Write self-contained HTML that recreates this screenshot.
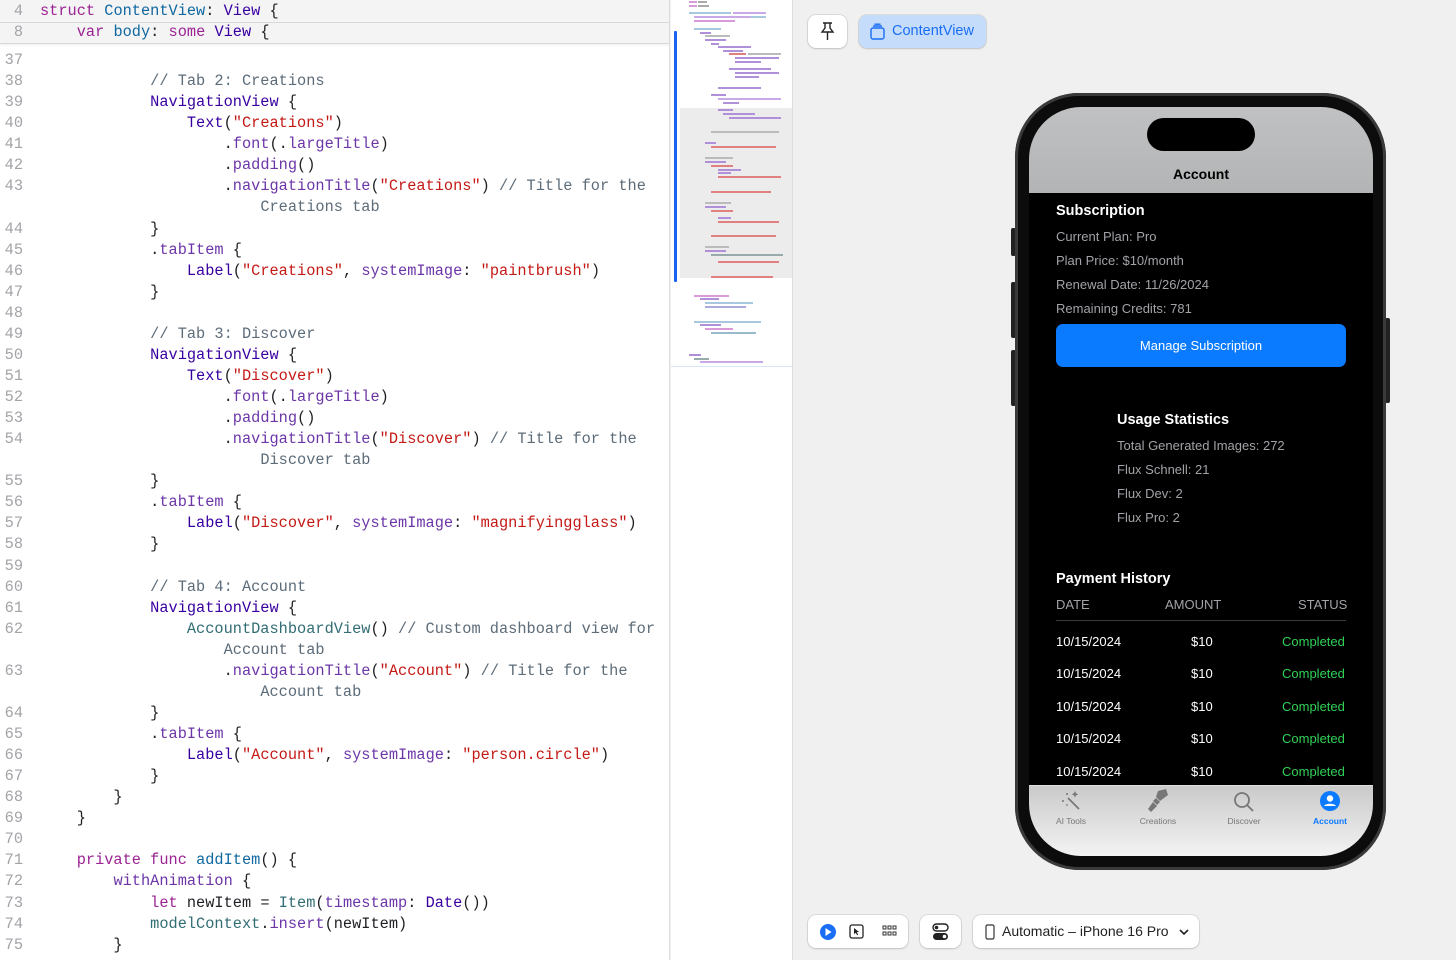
<!DOCTYPE html>
<html><head><meta charset="utf-8"><style>
*{margin:0;padding:0;box-sizing:border-box}
html,body{width:1456px;height:960px;overflow:hidden}
body{background:#f0f0f0;font-family:"Liberation Sans",sans-serif;position:relative}
#ed{position:absolute;left:0;top:0;width:670px;height:960px;background:#fff;border-right:1px solid #ddd;overflow:hidden}
.code{position:absolute;left:0;top:50px;font-family:"Liberation Mono",monospace;font-size:15.3px;line-height:21.07px;color:#1f1f24;white-space:pre}
.ln{display:inline-block;width:23px;text-align:right;color:#a3a3a8;margin-right:17px}
.k{color:#9b2393}.t{color:#3900a0}.f{color:#6c36a9}.s{color:#c41a16}.c{color:#5d6c79}.b{color:#0f68a0}.g{color:#326d74}
#hdr{position:absolute;left:0;top:0;width:670px;height:44px;background:#f4f4f5;border-bottom:1px solid #d8d8d8;box-shadow:0 1px 3px rgba(0,0,0,.08)}
#hdr .code{top:1px}
#hdr .r2{position:absolute;left:0;top:22px;width:670px;height:1px;background:#d8d8d8}
#mm{position:absolute;left:671px;top:0;width:122px;height:960px;background:#fff;border-right:1px solid #ddd}
.ab{position:absolute}
.btn{position:absolute;background:#fff;border-radius:8px;box-shadow:0 0 0 1px rgba(0,0,0,.08),0 1px 2px rgba(0,0,0,.12)}
.ph{position:absolute;color:#fff;font-size:13px;white-space:nowrap}
.gr{color:#a2a2a8}
</style></head><body>
<div id="ed">
<div class="code"><span class="ln">37</span>
<span class="ln">38</span>            <span class="c">// Tab 2: Creations</span>
<span class="ln">39</span>            <span class="t">NavigationView</span> {
<span class="ln">40</span>                <span class="t">Text</span>(<span class="s">"Creations"</span>)
<span class="ln">41</span>                    .<span class="f">font</span>(.<span class="f">largeTitle</span>)
<span class="ln">42</span>                    .<span class="f">padding</span>()
<span class="ln">43</span>                    .<span class="f">navigationTitle</span>(<span class="s">"Creations"</span>) <span class="c">// Title for the</span>
<span class="ln"></span>                        <span class="c">Creations tab</span>
<span class="ln">44</span>            }
<span class="ln">45</span>            .<span class="f">tabItem</span> {
<span class="ln">46</span>                <span class="t">Label</span>(<span class="s">"Creations"</span>, <span class="f">systemImage</span>: <span class="s">"paintbrush"</span>)
<span class="ln">47</span>            }
<span class="ln">48</span>
<span class="ln">49</span>            <span class="c">// Tab 3: Discover</span>
<span class="ln">50</span>            <span class="t">NavigationView</span> {
<span class="ln">51</span>                <span class="t">Text</span>(<span class="s">"Discover"</span>)
<span class="ln">52</span>                    .<span class="f">font</span>(.<span class="f">largeTitle</span>)
<span class="ln">53</span>                    .<span class="f">padding</span>()
<span class="ln">54</span>                    .<span class="f">navigationTitle</span>(<span class="s">"Discover"</span>) <span class="c">// Title for the</span>
<span class="ln"></span>                        <span class="c">Discover tab</span>
<span class="ln">55</span>            }
<span class="ln">56</span>            .<span class="f">tabItem</span> {
<span class="ln">57</span>                <span class="t">Label</span>(<span class="s">"Discover"</span>, <span class="f">systemImage</span>: <span class="s">"magnifyingglass"</span>)
<span class="ln">58</span>            }
<span class="ln">59</span>
<span class="ln">60</span>            <span class="c">// Tab 4: Account</span>
<span class="ln">61</span>            <span class="t">NavigationView</span> {
<span class="ln">62</span>                <span class="g">AccountDashboardView</span>() <span class="c">// Custom dashboard view for</span>
<span class="ln"></span>                    <span class="c">Account tab</span>
<span class="ln">63</span>                    .<span class="f">navigationTitle</span>(<span class="s">"Account"</span>) <span class="c">// Title for the</span>
<span class="ln"></span>                        <span class="c">Account tab</span>
<span class="ln">64</span>            }
<span class="ln">65</span>            .<span class="f">tabItem</span> {
<span class="ln">66</span>                <span class="t">Label</span>(<span class="s">"Account"</span>, <span class="f">systemImage</span>: <span class="s">"person.circle"</span>)
<span class="ln">67</span>            }
<span class="ln">68</span>        }
<span class="ln">69</span>    }
<span class="ln">70</span>
<span class="ln">71</span>    <span class="k">private func</span> <span class="b">addItem</span>() {
<span class="ln">72</span>        <span class="f">withAnimation</span> {
<span class="ln">73</span>            <span class="k">let</span> newItem = <span class="g">Item</span>(<span class="f">timestamp</span>: <span class="t">Date</span>())
<span class="ln">74</span>            <span class="g">modelContext</span>.<span class="f">insert</span>(newItem)
<span class="ln">75</span>        }</div>
<div id="hdr"><div class="r2"></div>
<div class="code"><span class="ln">4</span><span class="k">struct</span> <span class="b">ContentView</span>: <span class="t">View</span> {
<span class="ln">8</span>    <span class="k">var</span> <span class="b">body</span>: <span class="k">some</span> <span class="t">View</span> {</div></div>
</div>
<div id="mm">
<div class="ab" style="left:9px;top:108px;width:112px;height:170px;background:#ececec"></div>
<div class="ab" style="left:3px;top:31px;width:3px;height:251px;background:#1a62f0;border-radius:1px"></div>
<div class="ab" style="left:0;top:366px;width:121px;height:1px;background:#d8e6f8"></div>
<svg class="ab" style="left:0;top:0" width="122" height="370">
<g stroke-width="2">
<line x1="18" y1="2" x2="26" y2="2" stroke="#d89ad8"/><line x1="27" y1="2" x2="36" y2="2" stroke="#aaa"/>
<line x1="18" y1="6" x2="26" y2="6" stroke="#d89ad8"/><line x1="27" y1="6" x2="38" y2="6" stroke="#aaa"/>
<line x1="18" y1="13" x2="60" y2="13" stroke="#a8c8e0"/><line x1="62" y1="13" x2="95" y2="13" stroke="#c9a8e8"/>
<line x1="23" y1="17" x2="80" y2="17" stroke="#c9a8e8"/><line x1="80" y1="17" x2="95" y2="17" stroke="#a8c8e0"/>
<line x1="23" y1="21" x2="64" y2="21" stroke="#d89ad8"/>
<line x1="23" y1="29" x2="50" y2="29" stroke="#a8c8e0"/>
<line x1="29" y1="33" x2="40" y2="33" stroke="#b090d8"/>
<line x1="34" y1="36" x2="59" y2="36" stroke="#bbb"/>
<line x1="34" y1="40" x2="55" y2="40" stroke="#b090d8"/>
<line x1="40" y1="44" x2="48" y2="44" stroke="#b090d8"/>
<line x1="47" y1="47" x2="80" y2="47" stroke="#b090d8"/>
<line x1="52" y1="51" x2="72" y2="51" stroke="#b090d8"/>
<line x1="58" y1="54" x2="75" y2="54" stroke="#e08080"/><line x1="77" y1="54" x2="110" y2="54" stroke="#bbb"/>
<line x1="64" y1="58" x2="108" y2="58" stroke="#b090d8"/>
<line x1="64" y1="62" x2="90" y2="62" stroke="#b090d8"/>
<line x1="58" y1="69" x2="100" y2="69" stroke="#b090d8"/>
<line x1="64" y1="73" x2="108" y2="73" stroke="#b090d8"/>
<line x1="64" y1="77" x2="88" y2="77" stroke="#b090d8"/>
<line x1="47" y1="88" x2="90" y2="88" stroke="#b090d8"/>
<line x1="40" y1="95" x2="55" y2="95" stroke="#b090d8"/>
<line x1="47" y1="99" x2="110" y2="99" stroke="#c9a8e8"/>
<line x1="52" y1="103" x2="68" y2="103" stroke="#b090d8"/>
<line x1="47" y1="110" x2="62" y2="110" stroke="#b090d8"/>
<line x1="52" y1="114" x2="84" y2="114" stroke="#b090d8"/>
<line x1="58" y1="118" x2="110" y2="118" stroke="#b090d8"/>
<line x1="40" y1="132" x2="108" y2="132" stroke="#bbb"/>
<line x1="34" y1="143" x2="45" y2="143" stroke="#b090d8"/>
<line x1="40" y1="147" x2="105" y2="147" stroke="#e08080"/>
<line x1="34" y1="158" x2="62" y2="158" stroke="#bbb"/>
<line x1="34" y1="162" x2="55" y2="162" stroke="#b090d8"/>
<line x1="40" y1="166" x2="62" y2="166" stroke="#e08080"/>
<line x1="47" y1="170" x2="70" y2="170" stroke="#b090d8"/>
<line x1="47" y1="173" x2="60" y2="173" stroke="#b090d8"/>
<line x1="47" y1="177" x2="110" y2="177" stroke="#e08080"/>
<line x1="40" y1="192" x2="100" y2="192" stroke="#e08080"/>
<line x1="34" y1="203" x2="60" y2="203" stroke="#bbb"/>
<line x1="34" y1="207" x2="55" y2="207" stroke="#b090d8"/>
<line x1="40" y1="211" x2="62" y2="211" stroke="#e08080"/>
<line x1="47" y1="218" x2="60" y2="218" stroke="#b090d8"/>
<line x1="47" y1="222" x2="108" y2="222" stroke="#e08080"/>
<line x1="40" y1="236" x2="105" y2="236" stroke="#e08080"/>
<line x1="34" y1="247" x2="58" y2="247" stroke="#bbb"/>
<line x1="34" y1="251" x2="55" y2="251" stroke="#b090d8"/>
<line x1="40" y1="255" x2="112" y2="255" stroke="#99aaaa"/>
<line x1="47" y1="262" x2="108" y2="262" stroke="#e08080"/>
<line x1="40" y1="277" x2="102" y2="277" stroke="#e08080"/>
<line x1="23" y1="296" x2="58" y2="296" stroke="#d89ad8"/>
<line x1="29" y1="299" x2="48" y2="299" stroke="#b090d8"/>
<line x1="34" y1="303" x2="82" y2="303" stroke="#a8c8e0"/>
<line x1="34" y1="307" x2="75" y2="307" stroke="#aad"/>
<line x1="23" y1="322" x2="90" y2="322" stroke="#a8c8e0"/>
<line x1="29" y1="325" x2="50" y2="325" stroke="#b090d8"/>
<line x1="34" y1="329" x2="62" y2="329" stroke="#d89ad8"/>
<line x1="40" y1="333" x2="85" y2="333" stroke="#99bbcc"/>
<line x1="18" y1="355" x2="30" y2="355" stroke="#b090d8"/>
<line x1="23" y1="359" x2="38" y2="359" stroke="#99aaaa"/>
<line x1="29" y1="362" x2="92" y2="362" stroke="#c9a8e8"/>
</g></svg>
</div>

<div class="btn" style="left:808px;top:15px;width:39px;height:33px">
<svg width="39" height="33"><g fill="none" stroke="#222" stroke-width="1.4"><path d="M15 8h9M17 8v5l-3 4h11l-3-4V8M19.5 17v8"/></g></svg></div>
<div class="btn" style="left:859px;top:15px;width:127px;height:33px;background:#c5dcfb">
<svg class="ab" style="left:10px;top:8px" width="18" height="18"><g fill="none" stroke="#1a6ef5" stroke-width="1.4"><rect x="2" y="5" width="13" height="11" rx="2"/><path d="M4 3h9M5.5 1.2h6"/></g></svg>
<span class="ab" style="left:33px;top:8px;font-size:14.5px;color:#1a6ef5">ContentView</span></div>

<div class="btn" style="left:808px;top:915px;width:100px;height:33px">
<svg width="100" height="33"><circle cx="20" cy="17" r="8" fill="#1a6ef5"/><path d="M17.5 13v8l6-4z" fill="#fff"/>
<rect x="42" y="10" width="13" height="13" rx="2" fill="none" stroke="#222" stroke-width="1.3"/><path d="M46 13l5 4-2.3.3 1.5 2.5-1 .5-1.5-2.5-1.7 1.5z" fill="#222"/>
<g fill="none" stroke="#333" stroke-width="1"><rect x="75" y="11" width="3" height="3"/><rect x="80" y="11" width="3" height="3"/><rect x="85" y="11" width="3" height="3"/><rect x="75" y="17" width="3" height="3"/><rect x="80" y="17" width="3" height="3"/><rect x="85" y="17" width="3" height="3"/></g></svg></div>
<div class="btn" style="left:920px;top:915px;width:41px;height:33px">
<svg width="41" height="33"><rect x="13" y="9" width="15" height="7" rx="3.5" fill="none" stroke="#222" stroke-width="1.4"/><circle cx="16.5" cy="12.5" r="1.8" fill="#222"/><rect x="13" y="18" width="15" height="7" rx="3.5" fill="#222"/><circle cx="24.5" cy="21.5" r="1.8" fill="#fff"/></svg></div>
<div class="btn" style="left:973px;top:915px;width:226px;height:33px">
<svg class="ab" style="left:10px;top:8px" width="14" height="18"><rect x="3" y="2" width="8" height="14" rx="1.5" fill="none" stroke="#333" stroke-width="1.2"/></svg>
<span class="ab" style="left:29px;top:8px;font-size:14px;color:#222">Automatic – iPhone 16 Pro</span>
<svg class="ab" style="left:205px;top:12px" width="12" height="10"><path d="M2 3l4 4 4-4" fill="none" stroke="#222" stroke-width="1.6"/></svg></div>

<div class="ab" style="left:1011px;top:228px;width:5px;height:28px;background:#222;border-radius:2px"></div>
<div class="ab" style="left:1011px;top:282px;width:5px;height:56px;background:#222;border-radius:2px"></div>
<div class="ab" style="left:1011px;top:350px;width:5px;height:56px;background:#222;border-radius:2px"></div>
<div class="ab" style="left:1385px;top:318px;width:5px;height:85px;background:#222;border-radius:2px"></div>
<div class="ab" style="left:1015px;top:93px;width:371px;height:777px;background:#0c0c0c;border-radius:64px;box-shadow:inset 0 0 0 3px #3a3a3a"></div>
<div class="ab" style="left:1029px;top:107px;width:344px;height:749px;background:#000;border-radius:52px;overflow:hidden">
 <div class="ab" style="left:0;top:0;width:344px;height:86px;background:linear-gradient(#c0c1c2,#b3b4b5)"></div>
</div>
<div class="ab" style="left:1147px;top:118px;width:108px;height:33px;background:#000;border-radius:17px"></div>
<div class="ph" style="left:1029px;top:166px;width:344px;text-align:center;color:#000;font-size:14px;font-weight:bold">Account</div>

<div class="ph" style="left:1056px;top:203px;font-size:14.5px;font-weight:bold">Subscription</div>
<div class="ph gr" style="left:1056px;top:229px">Current Plan: Pro</div>
<div class="ph gr" style="left:1056px;top:253px">Plan Price: $10/month</div>
<div class="ph gr" style="left:1056px;top:277px">Renewal Date: 11/26/2024</div>
<div class="ph gr" style="left:1056px;top:301px">Remaining Credits: 781</div>
<div class="ab" style="left:1056px;top:324px;width:290px;height:43px;background:#0a7aff;border-radius:7px;color:#fff;font-size:13px;text-align:center;line-height:43px">Manage Subscription</div>

<div class="ph" style="left:1117px;top:412px;font-size:14.5px;font-weight:bold">Usage Statistics</div>
<div class="ph gr" style="left:1117px;top:438px">Total Generated Images: 272</div>
<div class="ph gr" style="left:1117px;top:462px">Flux Schnell: 21</div>
<div class="ph gr" style="left:1117px;top:486px">Flux Dev: 2</div>
<div class="ph gr" style="left:1117px;top:510px">Flux Pro: 2</div>

<div class="ph" style="left:1056px;top:571px;font-size:14.5px;font-weight:bold">Payment History</div>
<div class="ph gr" style="left:1056px;top:597px">DATE</div>
<div class="ph gr" style="left:1165px;top:597px">AMOUNT</div>
<div class="ph gr" style="left:1298px;top:597px">STATUS</div>
<div class="ab" style="left:1056px;top:620px;width:290px;height:1px;background:#3a3a3c"></div>

<div class="ph" style="left:1056px;top:634px">10/15/2024</div><div class="ph" style="left:1191px;top:634px">$10</div><div class="ph" style="left:1282px;top:634px;color:#30d158">Completed</div>
<div class="ph" style="left:1056px;top:666px">10/15/2024</div><div class="ph" style="left:1191px;top:666px">$10</div><div class="ph" style="left:1282px;top:666px;color:#30d158">Completed</div>
<div class="ph" style="left:1056px;top:699px">10/15/2024</div><div class="ph" style="left:1191px;top:699px">$10</div><div class="ph" style="left:1282px;top:699px;color:#30d158">Completed</div>
<div class="ph" style="left:1056px;top:731px">10/15/2024</div><div class="ph" style="left:1191px;top:731px">$10</div><div class="ph" style="left:1282px;top:731px;color:#30d158">Completed</div>
<div class="ph" style="left:1056px;top:764px">10/15/2024</div><div class="ph" style="left:1191px;top:764px">$10</div><div class="ph" style="left:1282px;top:764px;color:#30d158">Completed</div>
<div class="ab" style="left:1029px;top:785px;width:344px;height:1px;background:#e0e0e0"></div>
<div class="ab" style="left:1029px;top:786px;width:344px;height:70px;background:linear-gradient(#cacaca,#f3f3f3);border-radius:0 0 52px 52px"></div>

<svg class="ab" style="left:1060px;top:790px" width="24" height="22"><g stroke="#777" stroke-width="1.8" fill="none"><path d="M8 8l11 11"/></g><g fill="#777"><path d="M15 1l1 2.3 2.3 1-2.3 1L15 7.6l-1-2.3-2.3-1 2.3-1z"/><circle cx="7" cy="4" r="1"/><circle cx="3" cy="11" r="1"/><circle cx="7" cy="15" r="0.9"/></g></svg>
<svg class="ab" style="left:1146px;top:788px" width="24" height="26"><g fill="#777"><path d="M12 3l8-2 2 6-8 6-4-4z"/><path d="M10 10l4 4-3 3-4-4z"/><path d="M7 14l4 4-6 6-3-3z"/></g></svg>
<svg class="ab" style="left:1232px;top:790px" width="24" height="24"><g stroke="#777" stroke-width="1.8" fill="none"><circle cx="10" cy="10" r="7"/><path d="M15 15l6 6"/></g></svg>
<svg class="ab" style="left:1319px;top:790px" width="22" height="22"><circle cx="11" cy="11" r="10" fill="#0a7aff"/><circle cx="11" cy="8.5" r="3.2" fill="#fff"/><path d="M5 16c1.5-3 10.5-3 12 0z" fill="#fff"/></svg>
<div class="ph" style="left:1041px;top:816px;width:60px;text-align:center;font-size:8.5px;color:#777">AI Tools</div>
<div class="ph" style="left:1128px;top:816px;width:60px;text-align:center;font-size:8.5px;color:#777">Creations</div>
<div class="ph" style="left:1214px;top:816px;width:60px;text-align:center;font-size:8.5px;color:#777">Discover</div>
<div class="ph" style="left:1300px;top:816px;width:60px;text-align:center;font-size:8.5px;color:#0a7aff;font-weight:bold">Account</div>
</body></html>
